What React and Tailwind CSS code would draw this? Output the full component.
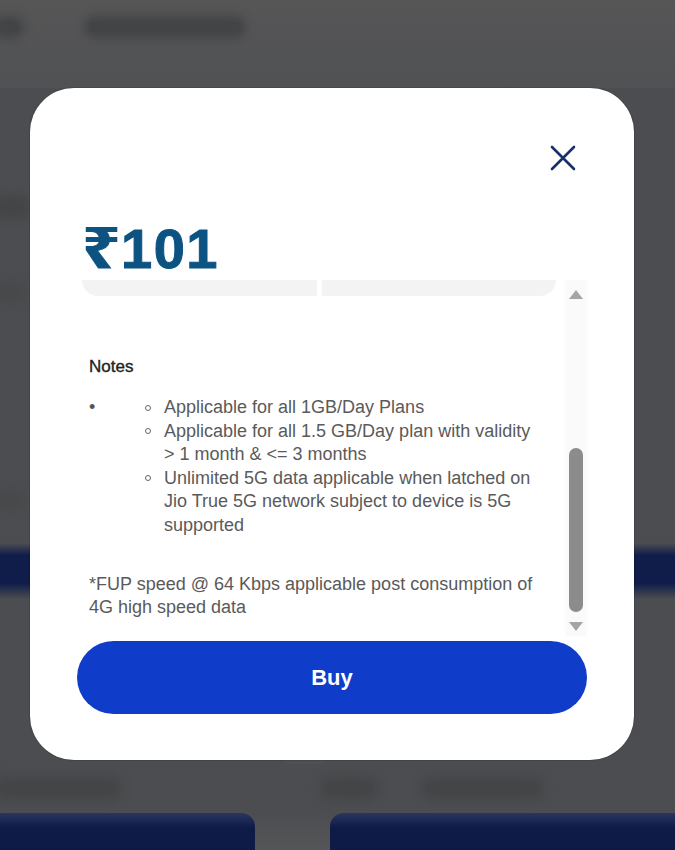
import React from 'react';

const notes = [
  ['Applicable for all 1GB/Day Plans'],
  ['Applicable for all 1.5 GB/Day plan with validity', '> 1 month & <= 3 months'],
  ['Unlimited 5G data applicable when latched on', 'Jio True 5G network subject to device is 5G', 'supported'],
];

// soft, out-of-focus shape standing in for the page behind the dialog
const Blob = ({ className }) => (
  <div className={`rounded-full bg-[#434446] shadow-[0_0_10px_6px_#434446] ${className}`} />
);

const Backdrop = () => (
  <div className="flex h-full w-full flex-col">
    {/* Page header */}
    <div className="flex h-[88px] items-start bg-linear-to-b from-[#565657] to-[#505153] pt-[22px]">
      <Blob className="h-[10px] w-[18px]" />
      <Blob className="ml-[72px] h-[10px] w-[150px]" />
    </div>
    <div className="flex h-[455px] flex-col bg-[#4c4d50]">
      <Blob className="mt-[114px] h-[10px] w-[24px] opacity-80" />
      <Blob className="mt-[76px] h-[8px] w-[20px] opacity-40" />
      <Blob className="mt-[200px] h-[8px] w-[20px] opacity-40" />
    </div>
    {/* Navy band */}
    <div className="h-[56px] bg-[linear-gradient(to_bottom,#4c4d50,#101c4a_22%,#101c4a_72%,#4c4d50)]" />
    {/* Plan row */}
    <div className="flex h-[165px] bg-[#4c4d50]">
      <div className="ml-[285px] h-full w-[40px] bg-[#4f5052]" />
    </div>
    <div className="flex h-[48px] items-center bg-[#4c4d50]">
      <Blob className="h-[10px] w-[115px] opacity-80" />
      <Blob className="ml-[212px] h-[10px] w-[45px] opacity-80" />
      <Blob className="ml-[55px] h-[10px] w-[110px] opacity-80" />
    </div>
    <div className="flex flex-1 items-end bg-[#4c4d50]">
      <div className="h-[37px] w-[255px] rounded-tr-[14px] bg-linear-to-b from-[#2a3560] to-[#0f1b47] to-40%" />
      <div className="h-full w-[75px] bg-linear-to-b from-[#4c4d50] to-[#555658]" />
      <div className="h-[37px] flex-1 rounded-tl-[14px] bg-linear-to-b from-[#2a3560] to-[#0f1b47] to-40%" />
    </div>
  </div>
);

const App = () => {
  return (
    <div
      className="relative h-[850px] w-[675px] overflow-hidden bg-[#4d4e50]"
      style={{ fontFamily: '"Liberation Sans", Arial, sans-serif' }}
    >
      <Backdrop />

      {/* Modal */}
      <div className="absolute left-[30px] top-[88px] flex h-[672px] w-[604px] flex-col rounded-[44px] bg-white px-[47px] shadow-[0_0_0_1px_rgba(0,0,0,0.12)]">
        {/* Close */}
        <div className="mt-[57px] flex h-[26px] justify-end pr-[11px]">
          <svg width="26" height="26" viewBox="0 0 26 26" fill="none">
            <path d="M2 2L24 24M24 2L2 24" stroke="#17306b" strokeWidth="2.6" strokeLinecap="round" />
          </svg>
        </div>

        {/* Price */}
        <div
          className="mt-[50px] flex pl-[5px] text-[56px] font-bold leading-none text-[#0c5382] [-webkit-text-stroke:1px_#0c5382]"
          style={{ fontFamily: '"Liberation Sans", "Noto Sans", "DejaVu Sans", sans-serif' }}
        >
          <span className="inline-block w-[39px] origin-left scale-x-[1.2]">₹</span>
          <span className="tracking-[1.5px]">101</span>
        </div>

        {/* Scroll area */}
        <div className="mt-[3px] flex h-[356px]">
          <div className="flex-1 overflow-hidden">
            <div className="flex gap-[5px] pl-[5px] pr-[9px]">
              <div className="h-[16px] flex-1 rounded-bl-[26px] bg-[#f3f3f3]" />
              <div className="h-[16px] flex-1 rounded-br-[26px] bg-[#f3f3f3]" />
            </div>

            <div className="pl-[12px]">
              <div className="mt-[61px] text-[17px] leading-[20px] text-[#222] [-webkit-text-stroke:0.35px_#222]">Notes</div>

              <div className="mt-[19px] flex text-[18px] leading-[23.5px] text-[#5a5a5a]">
                <div className="w-[56px] text-[#555]">•</div>
                <ul className="flex flex-col">
                  {notes.map((lines, i) => (
                    <li key={i} className="flex">
                      <div className="flex h-[23.5px] w-[19px] items-center">
                        <span className="h-[6px] w-[6px] rounded-full border border-[#666]" />
                      </div>
                      <div>
                        {lines.map((l, j) => (
                          <div key={j}>{l}</div>
                        ))}
                      </div>
                    </li>
                  ))}
                </ul>
              </div>

              <p className="mt-[35.5px] text-[18px] leading-[23.5px] text-[#5a5a5a]">
                *FUP speed @ 64 Kbps applicable post consumption of
                <br />
                4G high speed data
              </p>
            </div>
          </div>

          {/* Scrollbar */}
          <div className="flex w-[22px] flex-col items-center bg-[#fafafa] pt-[10px] pb-[5px]">
            <div className="h-0 w-0 border-x-[7px] border-b-[9px] border-x-transparent border-b-[#a5a5a5]" />
            <div className="flex w-full flex-1 flex-col items-center justify-end pb-[10px]">
              <div className="h-[164px] w-[14px] rounded-full bg-[#8c8c8c]" />
            </div>
            <div className="h-0 w-0 border-x-[7px] border-t-[9px] border-x-transparent border-t-[#a5a5a5]" />
          </div>
        </div>

        {/* Buy */}
        <button className="mt-[5px] flex h-[73px] w-full items-center justify-center rounded-full bg-[#0f3cc9] text-[22px] font-bold text-white">
          Buy
        </button>
      </div>
    </div>
  );
};

export default App;
